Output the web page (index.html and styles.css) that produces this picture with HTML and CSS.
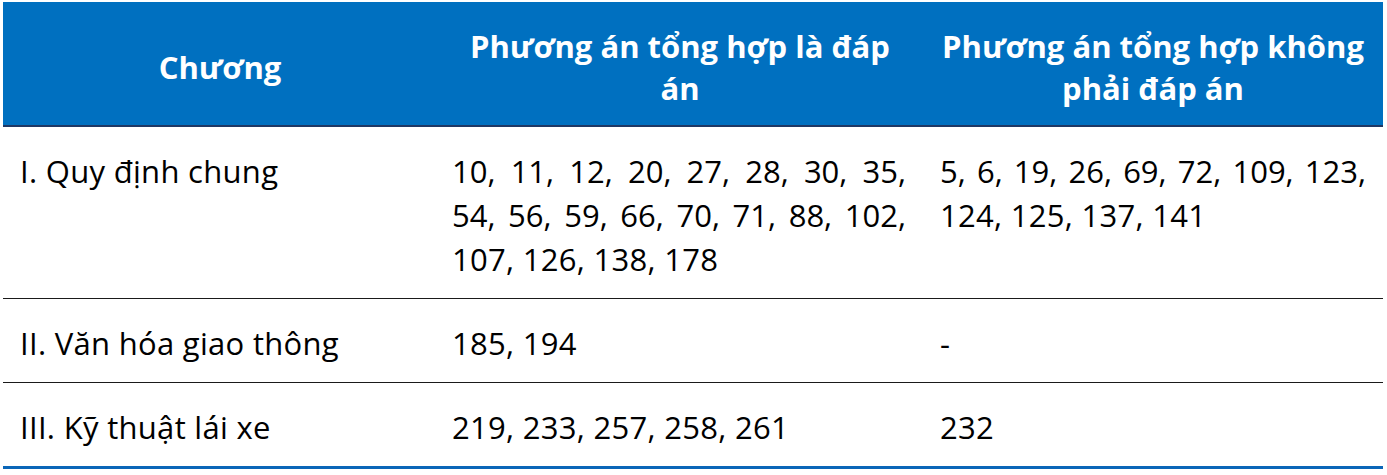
FILE: index.html
```html
<!DOCTYPE html>
<html lang="vi">
<head>
<meta charset="utf-8">
<title>Bảng phương án tổng hợp</title>
<link rel="stylesheet" href="styles.css">
</head>
<body>
<table class="tbl">
  <colgroup>
    <col class="c1">
    <col class="c2">
    <col class="c3">
  </colgroup>
  <thead>
    <tr>
      <th>Chương</th>
      <th>Phương án tổng hợp là đáp<br>án</th>
      <th>Phương án tổng hợp không<br>phải đáp án</th>
    </tr>
  </thead>
  <tbody>
    <tr>
      <td>I. Quy định chung</td>
      <td><span class="ln jl">10, 11, 12, 20, 27, 28, 30, 35,</span><span class="ln jl">54, 56, 59, 66, 70, 71, 88, 102,</span><span class="ln">107, 126, 138, 178</span></td>
      <td><span class="ln jl">5, 6, 19, 26, 69, 72, 109, 123,</span><span class="ln">124, 125, 137, 141</span></td>
    </tr>
    <tr>
      <td>II. Văn hóa giao thông</td>
      <td>185, 194</td>
      <td>-</td>
    </tr>
    <tr class="last">
      <td>III. Kỹ thuật lái xe</td>
      <td>219, 233, 257, 258, 261</td>
      <td>232</td>
    </tr>
  </tbody>
</table>
</body>
</html>
```

FILE: styles.css
```css
html, body {
  margin: 0;
  padding: 0;
  background: #ffffff;
}
body {
  padding: 2px 0 0 3px;
  font-family: "Open Sans", Lato, "Liberation Sans", sans-serif;
}
.tbl {
  width: 1380px;
  border-collapse: collapse;
  table-layout: fixed;
}
.c1 { width: 434px; }
.c2 { width: 486px; }
.c3 { width: 460px; }
.tbl th {
  background: #0070c0;
  color: #ffffff;
  font-weight: 700;
  font-size: 31px;
  line-height: 42px;
  text-align: center;
  height: 124px;
  padding: 6px 4px 0;
  box-sizing: border-box;
  vertical-align: middle;
  border-bottom: 2px solid #1f3864;
}
.tbl td {
  color: #000000;
  font-size: 31px;
  line-height: 44px;
  letter-spacing: 0.3px;
  vertical-align: top;
  padding: 22px 17px 17px 17px;
  border-bottom: 1px solid #1a1a1a;
}
.tbl td:nth-child(2) { padding-left: 15px; }
.tbl tr.last td {
  border-bottom: 3px solid #0a66b8;
}
.ln {
  display: block;
  white-space: nowrap;
}
.jl {
  text-align: justify;
  text-align-last: justify;
  letter-spacing: 0;
}
```
